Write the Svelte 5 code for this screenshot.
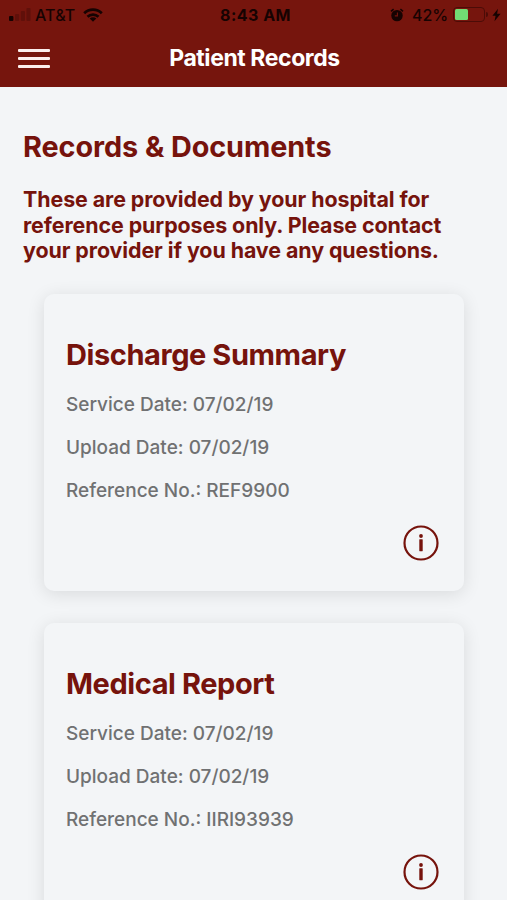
<script lang="ts">
  interface PatientRecord {
    title: string;
    serviceDate: string;
    uploadDate: string;
    reference: string;
  }

  const records: PatientRecord[] = [
    {
      title: 'Discharge Summary',
      serviceDate: '07/02/19',
      uploadDate: '07/02/19',
      reference: 'REF9900',
    },
    {
      title: 'Medical Report',
      serviceDate: '07/02/19',
      uploadDate: '07/02/19',
      reference: 'IIRI93939',
    },
  ];

  const batteryLevel = 42;
</script>

<div class="screen">
  <header>
    <div class="status">
      <div class="carrier">
        <svg class="signal" width="22" height="13" viewBox="0 0 22 13">
          <rect x="0" y="8" width="4.4" height="5" rx="1" />
          <g opacity="0.22">
            <rect x="6" y="6" width="4.2" height="7" rx="1" />
            <rect x="11.8" y="3" width="4.2" height="10" rx="1" />
            <rect x="17.4" y="0" width="4.2" height="13" rx="1" />
          </g>
        </svg>
        <span class="network">AT&T</span>
        <svg class="wifi" width="20" height="14" viewBox="0 0 20 14">
          <path d="M1.2 5.3a12.6 12.6 0 0 1 17.6 0" />
          <path d="M4.5 8.8a7.9 7.9 0 0 1 11 0" />
          <path class="dot" d="M10 13.8 6.7 10.5a4.7 4.7 0 0 1 6.6 0z" />
        </svg>
      </div>
      <span class="clock">8:43 AM</span>
      <div class="power">
        <svg class="alarm" width="14" height="14" viewBox="0 0 14 14">
          <circle cx="7" cy="7.6" r="5.7" />
          <path d="M1 3.4 3.6 1.2M13 3.4 10.4 1.2" />
          <path class="hands" d="M7.4 4.6v3.3H4.8" />
        </svg>
        <span class="percent">{batteryLevel}%</span>
        <div class="battery">
          <div class="level" style="width: {batteryLevel + 4}%"></div>
        </div>
        <div class="cap"></div>
        <svg class="bolt" width="9" height="14" viewBox="0 0 9 14">
          <path d="M6 .8 .4 7.8h3.2L2.5 13.2 8.6 5.8H5.1z" />
        </svg>
      </div>
    </div>

    <div class="navbar">
      <button class="menu" aria-label="Menu">
        <span></span>
        <span></span>
        <span></span>
      </button>
      <h1>Patient Records</h1>
    </div>
  </header>

  <main>
    <h2>Records &amp; Documents</h2>
    <p class="intro">
      These are provided by your hospital for<br />
      reference purposes only. Please contact<br />
      your provider if you have any questions.
    </p>

    <div class="cards">
      {#each records as record}
        <article class="card">
          <h3>{record.title}</h3>
          <p class="meta">Service Date: {record.serviceDate}</p>
          <p class="meta">Upload Date: {record.uploadDate}</p>
          <p class="meta">Reference No.: {record.reference}</p>
          <button class="info" aria-label="Details">
            <svg width="36" height="36" viewBox="0 0 36 36">
              <circle class="ring" cx="18" cy="18" r="16.5" />
              <circle cx="18" cy="11" r="1.9" />
              <rect x="16.3" y="14.3" width="3.4" height="11.9" rx="0.4" />
            </svg>
          </button>
        </article>
      {/each}
    </div>
  </main>
</div>

<style>
  :global(body) {
    margin: 0;
    overflow: hidden;
  }

  .screen {
    height: 900px;
    overflow: hidden;
    background: #f3f5f7;
    color: #76130c;
    font-family: Inter, 'Liberation Sans', sans-serif;
  }

  h1,
  h2,
  h3,
  p {
    margin: 0;
    white-space: nowrap;
  }

  button {
    background: none;
    border: none;
    padding: 0;
    color: inherit;
  }

  svg {
    display: block;
    flex: none;
  }

  header {
    height: 87px;
    background: #76150d;
  }

  .status {
    display: grid;
    grid-template-columns: 1fr auto 1fr;
    align-items: center;
    height: 30px;
    padding: 0 6px 0 9px;
    color: #160302;
    font-size: 16px;
    line-height: 30px;
  }

  .carrier,
  .power {
    display: flex;
    align-items: center;
  }

  .carrier svg,
  .power svg,
  .battery,
  .cap {
    margin-bottom: 1px;
  }

  .power {
    justify-content: flex-end;
  }

  .signal,
  .alarm,
  .bolt {
    fill: #160302;
  }

  .network {
    margin-left: 4px;
    font-weight: 500;
    letter-spacing: 0.15px;
  }

  .wifi {
    margin-left: 8px;
    fill: none;
    stroke: #160302;
    stroke-width: 2.7;
  }

  .wifi .dot {
    fill: #160302;
    stroke: none;
  }

  .clock {
    padding-left: 1px;
    font-weight: 700;
    letter-spacing: 0.5px;
  }

  .alarm {
    stroke: #160302;
    stroke-width: 1.6;
  }

  .alarm circle {
    stroke: none;
  }

  .alarm .hands {
    fill: none;
    stroke: #76150d;
    stroke-width: 1.1;
  }

  .percent {
    margin-left: 8px;
    font-weight: 500;
    letter-spacing: -0.1px;
  }

  .battery {
    box-sizing: border-box;
    width: 32px;
    height: 15px;
    margin-left: 5px;
    padding: 1px;
    border: 1px solid #4c0c07;
    border-radius: 4px;
  }

  .level {
    height: 100%;
    border-radius: 1.5px;
    background: #72dc74;
  }

  .cap {
    width: 2px;
    height: 5px;
    margin-left: 1px;
    border-radius: 0 2px 2px 0;
    background: #4c0c07;
  }

  .bolt {
    margin-left: 4px;
  }

  .navbar {
    display: grid;
    grid-template-columns: 32px 1fr 32px;
    align-items: center;
    height: 56px;
    padding: 0 16px 0 18px;
  }

  .menu {
    display: flex;
    flex-direction: column;
    gap: 5px;
  }

  .menu span {
    height: 3px;
    border-radius: 1px;
    background: #fcefed;
  }

  h1 {
    color: #fff;
    font-size: 23px;
    font-weight: 700;
    letter-spacing: -0.42px;
    line-height: 30px;
    text-align: center;
  }

  main {
    padding: 42px 0 0 23px;
  }

  h2 {
    font-size: 28.8px;
    font-weight: 700;
    letter-spacing: -0.07px;
    line-height: 36px;
  }

  .intro {
    margin-top: 22px;
    font-size: 21.4px;
    font-weight: 700;
    letter-spacing: -0.07px;
    line-height: 25.7px;
  }

  .cards {
    display: flex;
    flex-direction: column;
    gap: 32px;
    margin: 30px 43px 0 21px;
  }

  .card {
    display: flex;
    flex-direction: column;
    box-sizing: border-box;
    height: 297px;
    padding: 43px 25.5px 0 22px;
    border-radius: 10px;
    background: #f3f5f7;
    box-shadow: 0 3px 18px rgba(0, 0, 0, 0.11);
  }

  h3 {
    margin-bottom: 10px;
    font-size: 29px;
    font-weight: 700;
    letter-spacing: -0.42px;
    line-height: 36px;
  }

  .meta {
    color: #707172;
    font-size: 19px;
    font-weight: 500;
    line-height: 43px;
  }

  .info {
    align-self: flex-end;
    margin-top: 13px;
  }

  .info svg {
    fill: #76130c;
  }

  .info .ring {
    fill: none;
    stroke: #76130c;
    stroke-width: 2.2;
  }
</style>
